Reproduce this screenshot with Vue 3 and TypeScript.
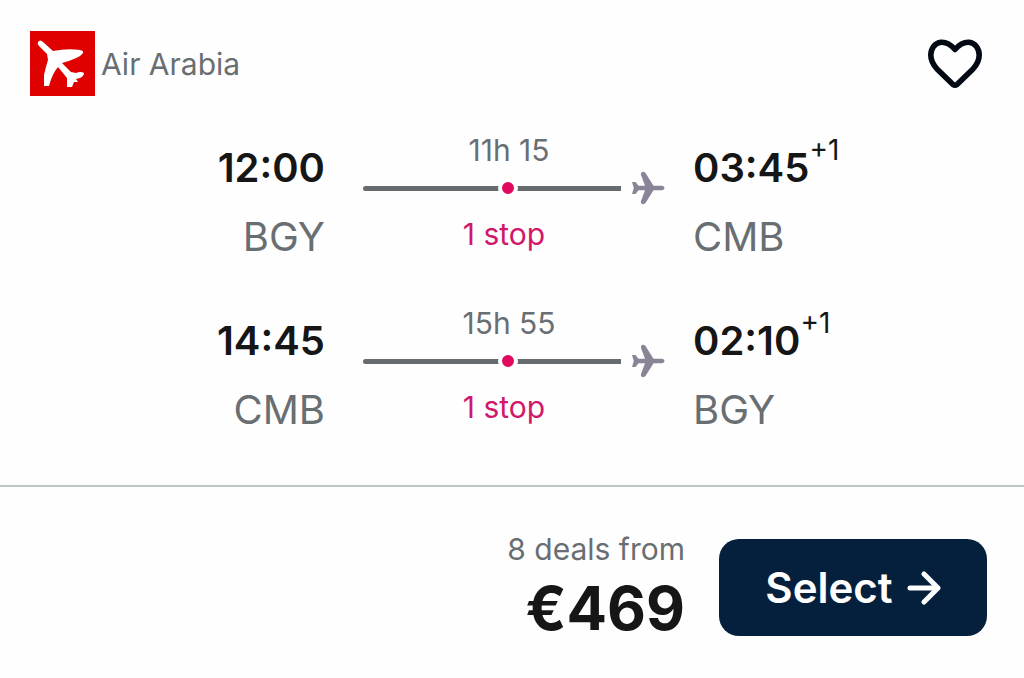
<script setup lang="ts">
import { ref } from 'vue'

interface Leg {
  depart: string
  from: string
  duration: string
  stops: string
  arrive: string
  dayOffset: string
  to: string
}

const saved = ref(false)

const legs: Leg[] = [
  { depart: '12:00', from: 'BGY', duration: '11h 15', stops: '1 stop', arrive: '03:45', dayOffset: '+1', to: 'CMB' },
  { depart: '14:45', from: 'CMB', duration: '15h 55', stops: '1 stop', arrive: '02:10', dayOffset: '+1', to: 'BGY' },
]
</script>

<template>
  <article class="ticket">
    <header class="head">
      <div class="airline">
        <svg class="logo" viewBox="0 0 65 65" aria-hidden="true">
          <rect width="65" height="65" fill="#e00000" />
          <path
            d="M8 11 Q10 8 13 11 L23 20 Q38 17 50 19 Q54 20 53 22 Q50 27 32 32 L41 41 L46 42 Q51 40 54 42 Q54 45 50 47 L46 48 L48 51 L44 51 L42 56 L37 56 L37 47 L28 36 Q22 43 19 55 L14 55 L14 44 Q16 35 18 29 L17 23 L9 15 Q7 13 8 11 Z"
            fill="#fff"
          />
        </svg>
        <span class="airline-name">Air Arabia</span>
      </div>
      <button class="save" type="button" aria-label="Save flight" :aria-pressed="saved" @click="saved = !saved">
        <svg class="heart" viewBox="0 0 54 50" aria-hidden="true">
          <path
            d="M27 10.500 C22 4.800 17 3 13 3.300 C6.500 4 2.800 10 2.800 16 C2.800 21.500 5 25.500 9 30 L25 45.500 Q27 47 29 45.500 L45 30 C49 25.500 51.200 21.500 51.200 16 C51.200 10 47.500 4 41 3.300 C37 3 32 4.800 27 10.500 Z"
            :fill="saved ? '#020913' : 'none'"
            stroke="#020913"
            stroke-width="5.600"
            stroke-linejoin="round"
          />
        </svg>
      </button>
    </header>

    <section class="legs">
      <div v-for="leg in legs" :key="leg.from" class="leg">
        <div class="end depart">
          <div class="time">{{ leg.depart }}</div>
          <div class="code">{{ leg.from }}</div>
        </div>
        <div class="route">
          <div class="duration">{{ leg.duration }}</div>
          <div class="track">
            <span class="line"><span class="dot"></span></span>
            <svg class="plane" viewBox="0 0 34 34" aria-hidden="true">
              <path
                d="M10.500 1.500 Q12.500 0 14.500 2 L22.500 14.800 H31 Q33.500 15 33.500 17 Q33.500 19 31 19.200 H22.500 L14.500 32 Q12.500 34 10.500 32.500 Q9.500 31.500 10 30 L14 19.200 H7.500 L4.500 23 H1 L2.800 17 L1 11 H4.500 L7.500 14.800 H14 L10 4 Q9.500 2.500 10.500 1.500 Z"
                fill="#8a8496"
              />
            </svg>
          </div>
          <div class="stops">{{ leg.stops }}</div>
        </div>
        <div class="end">
          <div class="time">{{ leg.arrive }}<sup class="offset">{{ leg.dayOffset }}</sup></div>
          <div class="code">{{ leg.to }}</div>
        </div>
      </div>
    </section>

    <footer class="foot">
      <div class="deal">
        <div class="deal-label">8 deals from</div>
        <div class="price">€469</div>
      </div>
      <button class="select" type="button">
        Select
        <svg class="arrow" viewBox="0 0 34 34" aria-hidden="true">
          <path d="M3 17 H30 M17 3 L31 17 L17 31" fill="none" stroke="#fff" stroke-width="5" stroke-linecap="round" stroke-linejoin="round" />
        </svg>
      </button>
    </footer>
  </article>
</template>

<style>
body {
  margin: 0;
  background: #fefefe;
}
</style>

<style scoped>
.ticket {
  font-family: Inter, "Liberation Sans", sans-serif;
  color: #161616;
}

.head {
  display: flex;
  align-items: center;
  justify-content: space-between;
  padding: 31px 42px 0 30px;
}

.airline {
  display: flex;
  align-items: center;
  gap: 6px;
}

.logo {
  width: 65px;
  height: 65px;
}

.airline-name {
  font-size: 30px;
  color: #696e73;
}

.save {
  display: flex;
  padding: 0;
  border: 0;
  background: none;
  cursor: pointer;
}

.heart {
  width: 54px;
  height: 50px;
}

.legs {
  display: grid;
  gap: 35px;
  padding: 37px 30px 41px 24px;
}

.leg {
  display: grid;
  grid-template-columns: minmax(0, 1fr) 312px minmax(0, 1fr);
  column-gap: 28px;
}

.depart {
  text-align: right;
}

.time {
  font-size: 40px;
  font-weight: 600;
  line-height: 70px;
  white-space: nowrap;
}

.offset {
  font-size: 28px;
  font-weight: 400;
  line-height: 0;
  vertical-align: 22px;
}

.code {
  font-size: 40px;
  line-height: 68px;
  color: #696e73;
}

.route {
  text-align: center;
}

.duration,
.stops {
  font-size: 30px;
  line-height: 34px;
}

.duration {
  color: #696e73;
}

.track {
  display: flex;
  align-items: center;
  gap: 10px;
  height: 42px;
  margin-bottom: 8px;
  padding-left: 10px;
}

.line {
  display: flex;
  flex: 1;
  align-items: center;
  justify-content: center;
  height: 5px;
  padding-left: 32px;
  border-radius: 3px 0 0 3px;
  background: #666b6f;
}

.dot {
  width: 12px;
  height: 12px;
  border: 4px solid #fefefe;
  border-radius: 50%;
  background: #e0085f;
}

.plane {
  width: 34px;
  height: 34px;
}

.stops {
  padding-right: 10px;
  color: #d0176b;
}

.foot {
  display: flex;
  align-items: center;
  justify-content: flex-end;
  gap: 34px;
  padding: 45px 37px 35px;
  border-top: 2px solid #bfc6c6;
}

.deal {
  display: grid;
  gap: 7px;
  text-align: right;
}

.deal-label {
  font-size: 30px;
  line-height: 34px;
  color: #696e73;
}

.price {
  font-size: 60px;
  font-weight: 700;
  line-height: 70px;
}

.select {
  display: flex;
  align-items: center;
  justify-content: center;
  gap: 14px;
  width: 268px;
  height: 97px;
  padding: 0;
  border: 0;
  border-radius: 20px;
  background: #05203c;
  color: #fff;
  font-family: inherit;
  font-size: 42px;
  font-weight: 600;
  cursor: pointer;
}

.arrow {
  width: 34px;
  height: 34px;
}
</style>
